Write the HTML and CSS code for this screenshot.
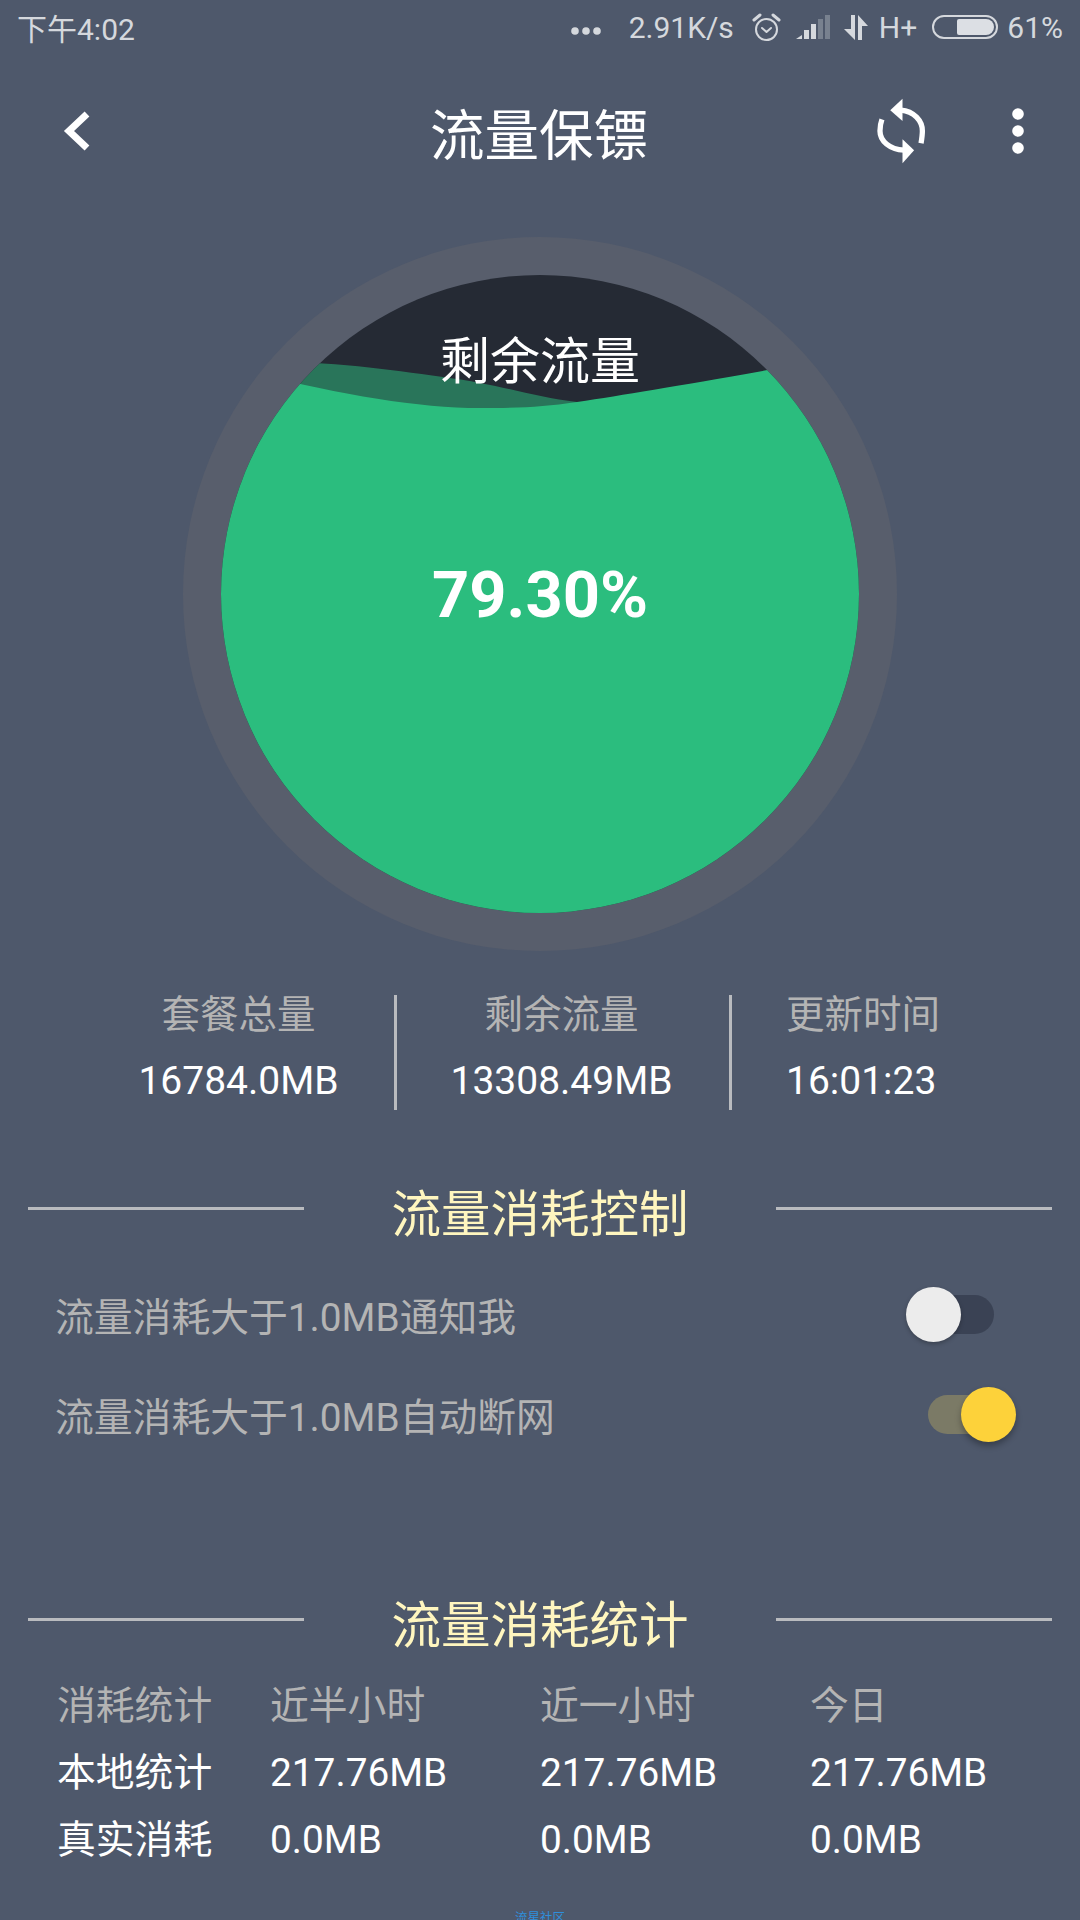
FILE: index.html
```html
<!DOCTYPE html>
<html lang="zh-CN">
<head>
    <meta charset="UTF-8">
    <meta name="viewport" content="width=device-width, initial-scale=1.0">
    <title>流量保镖</title>
    <link rel="stylesheet" href="styles.css">
</head>
<body>
    <div class="screen">
        <div class="status-bar">
            <span class="status-time">下午4:02</span>
            <div class="status-right">
                <svg class="st-dots" width="30" height="8" viewBox="0 0 30 8"><circle cx="4" cy="4" r="3.8"/><circle cx="15" cy="4" r="3.8"/><circle cx="26" cy="4" r="3.8"/></svg>
                <span class="st-speed">2.91K/s</span>
                <svg class="st-alarm" width="29" height="29" viewBox="0 0 29 29" fill="none" stroke="#d5d8dd" stroke-width="2"><circle cx="14.500" cy="16.500" r="10.500"/><path d="M10 15l4.500 4 4.500-4" stroke-linecap="round" stroke-linejoin="round"/><path d="M2 7l6-5M27 7l-6-5" stroke-width="3" stroke-linecap="round"/></svg>
                <svg class="st-signal" width="34" height="24" viewBox="0 0 34 24"><path d="M0 24l6-4v4z" fill="#d5d8dd"/><rect x="8" y="15" width="5" height="9" fill="#d5d8dd"/><rect x="15" y="9" width="5" height="15" fill="#d5d8dd"/><rect x="22" y="4" width="5" height="20" fill="#78818f"/><rect x="29" y="0" width="5" height="24" fill="#78818f"/></svg>
                <svg class="st-arrows" width="24" height="25" viewBox="0 0 24 25" fill="#d5d8dd"><path d="M7 0h4v25L0 14h7z"/><path d="M14 25h4V11h6L14 0z"/></svg>
                <span class="st-net">H+</span>
                <div class="battery"><div class="battery-fill"></div></div>
                <span class="st-pct">61%</span>
            </div>
        </div>

        <div class="toolbar">
            <svg class="tb-back" width="27" height="40" viewBox="0 0 27 40" fill="none" stroke="#fff" stroke-width="7"><path d="M24 3L6 20l18 17"/></svg>
            <h1 class="tb-title">流量保镖</h1>
            <svg class="tb-refresh" width="53" height="70" viewBox="50 20 160 210">
                <path d="M125 62C165 65 190 95 190 125C190 137 188 150 186 162" fill="none" stroke="#fff" stroke-width="16"/>
                <path d="M68 90C63 103 62 115 62 125C62 155 90 180 135 183" fill="none" stroke="#fff" stroke-width="16"/>
                <path d="M93 62L130 28V95z" fill="#fff"/>
                <path d="M165 183L130 150V222z" fill="#fff"/>
            </svg>
            <svg class="tb-more" width="12" height="46" viewBox="0 0 12 46" fill="#fff"><circle cx="6" cy="6" r="5.800"/><circle cx="6" cy="23" r="5.800"/><circle cx="6" cy="40" r="5.800"/></svg>
        </div>

        <div class="gauge">
            <svg width="714" height="714" viewBox="0 0 714 714">
                <defs><clipPath id="inner"><circle cx="357" cy="357" r="319"/></clipPath></defs>
                <circle cx="357" cy="357" r="357" fill="#585e6c"/>
                <g clip-path="url(#inner)">
                    <rect width="714" height="714" fill="#252a34"/>
                    <path d="M60 124C150 124 200 132 260 140S350 160 394 165V714H60z" fill="#29755a"/>
                    <path d="M0 118C120 150 220 171 297 171C340 171 360 170 394 165C460 155 530 143 714 110V714H0z" fill="#2bbd7e"/>
                </g>
            </svg>
            <div class="gauge-label">剩余流量</div>
            <div class="gauge-value">79.30%</div>
        </div>

        <div class="stats">
            <div class="stat">
                <div class="stat-label">套餐总量</div>
                <div class="stat-value">16784.0MB</div>
            </div>
            <div class="stat">
                <div class="stat-label">剩余流量</div>
                <div class="stat-value">13308.49MB</div>
            </div>
            <div class="stat stat-time">
                <div class="stat-label">更新时间</div>
                <div class="stat-value">16:01:23</div>
            </div>
        </div>

        <div class="section-head section-control">
            <span class="section-line"></span>
            <h2>流量消耗控制</h2>
            <span class="section-line"></span>
        </div>

        <div class="toggle-row">
            <span>流量消耗大于1.0MB通知我</span>
            <div class="switch"><span class="knob"></span></div>
        </div>
        <div class="toggle-row">
            <span>流量消耗大于1.0MB自动断网</span>
            <div class="switch on"><span class="knob"></span></div>
        </div>

        <div class="section-head section-usage">
            <span class="section-line"></span>
            <h2>流量消耗统计</h2>
            <span class="section-line"></span>
        </div>

        <div class="usage">
            <span class="muted">消耗统计</span><span class="muted">近半小时</span><span class="muted">近一小时</span><span class="muted">今日</span>
            <span>本地统计</span><span>217.76MB</span><span>217.76MB</span><span>217.76MB</span>
            <span>真实消耗</span><span>0.0MB</span><span>0.0MB</span><span>0.0MB</span>
        </div>

        <div class="watermark">流星社区</div>
    </div>
</body>
</html>
```

FILE: styles.css
```css
body {
    margin: 0;
    background-color: #4e586b;
    font-family: Roboto, "Noto Sans CJK SC", sans-serif;
}

h1, h2 {
    margin: 0;
    font-weight: 400;
}

.screen {
    width: 1080px;
    height: 1920px;
    overflow: hidden;
    display: flex;
    flex-direction: column;
    color: #fff;
}

/* status bar */
.status-bar {
    height: 54px;
    display: flex;
    justify-content: space-between;
    align-items: center;
    padding: 0 17px;
    color: #d5d8dd;
    font-size: 30px;
    flex-shrink: 0;
}

.status-right {
    display: flex;
    align-items: center;
}

.st-dots {
    fill: #d5d8dd;
    margin: 8px 28px 0 0;
}

.st-alarm {
    margin: 0 15px 0 18px;
}

.st-arrows {
    margin: 0 11px 0 14px;
}

.battery {
    width: 66px;
    height: 24px;
    margin: 0 9px 0 15px;
    box-sizing: border-box;
    border: 2px solid #d5d8dd;
    border-radius: 12px;
    padding: 2px;
    display: flex;
    justify-content: flex-end;
}

.battery-fill {
    width: 37px;
    background-color: #dcdfe4;
    border-radius: 2px 8px 8px 2px;
}

/* toolbar */
.toolbar {
    height: 154px;
    display: flex;
    align-items: center;
    padding-left: 63px;
    flex-shrink: 0;
}

.tb-title {
    font-size: 54.500px;
    margin-left: 340px;
    width: 217px;
    white-space: nowrap;
}

.tb-refresh {
    margin-left: 229px;
}

.tb-more {
    margin-left: 83px;
}

/* gauge */
.gauge {
    position: relative;
    width: 714px;
    height: 714px;
    margin: 29px 0 0 183px;
    flex-shrink: 0;
}

.gauge svg {
    display: block;
}

.gauge-label {
    position: absolute;
    left: 0;
    right: 0;
    top: 89px;
    text-align: center;
    font-size: 50px;
    line-height: 72px;
}

.gauge-value {
    position: absolute;
    left: 0;
    right: 0;
    top: 310px;
    text-align: center;
    font-size: 65px;
    font-weight: 700;
    line-height: 96px;
}

/* stats under the gauge */
.stats {
    display: grid;
    grid-template-columns: 311px 335px 268px;
    margin: 44px 0 0 83px;
    height: 115px;
    flex-shrink: 0;
}

.stat {
    text-align: center;
    font-size: 38.500px;
    line-height: 40px;
}

.stat + .stat {
    border-left: 3px solid #b9bbbf;
    padding-right: 3px;
}

.stat-time {
    text-align: left;
    padding-left: 54px;
}

.stat-label {
    color: #b4b4b4;
    margin-bottom: 26px;
}

.stat-value {
    font-size: 39px;
}

/* section headings */
.section-head {
    display: flex;
    align-items: center;
    padding: 0 28px;
    flex-shrink: 0;
}

.section-control {
    margin-top: 75px;
}

.section-usage {
    margin-top: 133px;
}

.section-head h2 {
    width: 300px;
    margin: 0 86px;
    text-align: center;
    font-size: 49.500px;
    line-height: 60px;
    color: #fff6bf;
    white-space: nowrap;
}

.section-line {
    flex: 1;
    height: 3px;
    margin-bottom: 14px;
    background-color: #b9bbbf;
}

/* switches */
.toggle-row {
    height: 100px;
    display: flex;
    justify-content: space-between;
    align-items: center;
    padding: 0 86px 0 55px;
    font-size: 38.800px;
    color: #b4b4b4;
    flex-shrink: 0;
}

.section-control + .toggle-row {
    margin-top: 19px;
}

.section-control + .toggle-row + .toggle-row {
    margin-bottom: -1px;
}

.switch {
    position: relative;
    width: 66px;
    height: 39px;
    border-radius: 20px;
    background-color: #3a4254;
}

.knob {
    position: absolute;
    top: -8px;
    left: -22px;
    width: 55px;
    height: 55px;
    border-radius: 50%;
    background-color: #ececec;
    box-shadow: 0 2px 4px rgba(0, 0, 0, 0.25);
}

.switch.on {
    background-color: #7b7a66;
}

.switch.on .knob {
    left: auto;
    right: -22px;
    background-color: #fdd23a;
    box-shadow: 0 4px 6px rgba(0, 0, 0, 0.3);
}

/* usage table */
.usage {
    display: grid;
    grid-template-columns: 213px 270px 270px 1fr;
    grid-auto-rows: 67px;
    align-items: baseline;
    margin-top: 18px;
    padding-left: 57px;
    font-size: 38.800px;
    flex-shrink: 0;
}

.muted {
    color: #b4b4b4;
}

.watermark {
    margin-top: 33px;
    text-align: center;
    font-size: 12.500px;
    line-height: 20px;
    color: #2f8fdc;
}
```
